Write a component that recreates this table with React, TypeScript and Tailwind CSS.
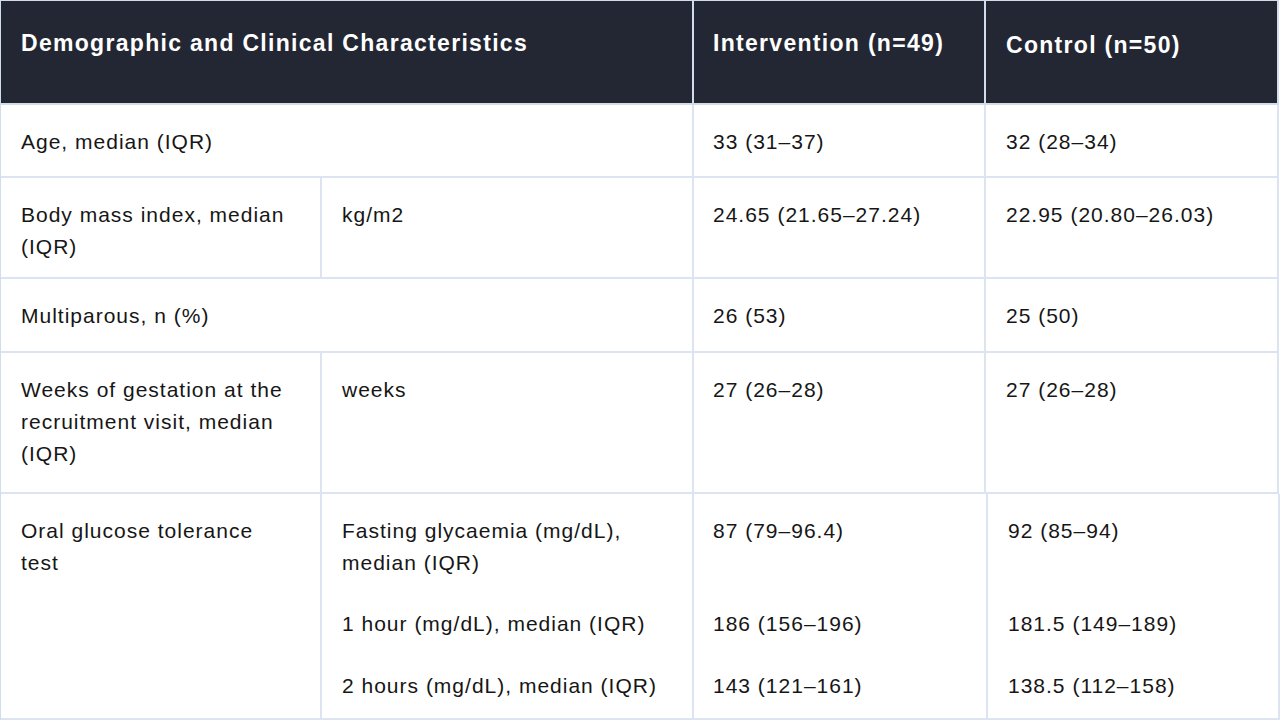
import React from "react";

const font = "font-['Liberation_Sans',Arial,Helvetica,sans-serif]";

function Cell({
  children,
  className = "",
}: {
  children?: React.ReactNode;
  className?: string;
}) {
  return (
    <div
      className={`border-r-2 border-b-2 border-[#dce4f2] pl-5 pr-5 pt-[21px] text-[21px] leading-[32px] tracking-[1px] text-[#161616] ${className}`}
    >
      {children}
    </div>
  );
}

function HeadCell({
  children,
  className = "",
}: {
  children?: React.ReactNode;
  className?: string;
}) {
  return (
    <div
      className={`h-[104px] border-r-2 border-b-2 border-[#d3dcec] bg-[#232733] pl-5 pt-[26px] text-[23px] font-bold leading-[32px] tracking-[1.3px] text-white whitespace-nowrap ${className}`}
    >
      {children}
    </div>
  );
}

export default function App() {
  return (
    <div className={`h-[720px] w-[1280px] overflow-hidden bg-white ${font}`}>
      <div className="grid w-[1279px] grid-cols-[321px_372px_292px_293px] border-l border-t border-[#d3dcec]">
        <HeadCell className="col-span-2">Demographic and Clinical Characteristics</HeadCell>
        <HeadCell className="pl-[19px]">Intervention (n=49)</HeadCell>
        <HeadCell className="pt-[28px]">Control (n=50)</HeadCell>

        <Cell className="col-span-2 h-[73px]">Age, median (IQR)</Cell>
        <Cell className="h-[73px] pl-[19px]">33 (31–37)</Cell>
        <Cell className="h-[73px]">32 (28–34)</Cell>

        <Cell className="h-[101px]">
          Body mass index, median
          <br />
          (IQR)
        </Cell>
        <Cell className="h-[101px]">kg/m2</Cell>
        <Cell className="h-[101px] pl-[19px]">24.65 (21.65–27.24)</Cell>
        <Cell className="h-[101px] whitespace-nowrap">22.95 (20.80–26.03)</Cell>

        <Cell className="col-span-2 h-[74px]">Multiparous, n (%)</Cell>
        <Cell className="h-[74px] pl-[19px]">26 (53)</Cell>
        <Cell className="h-[74px]">25 (50)</Cell>

        <Cell className="h-[141px] pt-5 leading-[30.5px]">
          Weeks of gestation at the
          <br />
          recruitment visit, median
          <br />
          (IQR)
        </Cell>
        <Cell className="h-[141px] pt-5 text-[#383d4a]">weeks</Cell>
        <Cell className="h-[141px] pt-5 pl-[19px] text-[#383d4a]">27 (26–28)</Cell>
        <Cell className="h-[141px] pt-5 text-[#383d4a]">27 (26–28)</Cell>
      </div>

      <div className="grid w-[1280px] grid-cols-[321px_372px_294px_292px] border-l border-[#d3dcec]">
        <Cell className="h-[226px]">
          Oral glucose tolerance
          <br />
          test
        </Cell>
        <Cell className="h-[226px] whitespace-nowrap">
          <div className="h-[93px]">
            Fasting glycaemia (mg/dL),
            <br />
            median (IQR)
          </div>
          <div className="h-[62px]">1 hour (mg/dL), median (IQR)</div>
          <div>2 hours (mg/dL), median (IQR)</div>
        </Cell>
        <Cell className="h-[226px] pl-[19px] whitespace-nowrap">
          <div className="h-[93px]">87 (79–96.4)</div>
          <div className="h-[62px]">186 (156–196)</div>
          <div>143 (121–161)</div>
        </Cell>
        <Cell className="h-[226px] whitespace-nowrap">
          <div className="h-[93px]">92 (85–94)</div>
          <div className="h-[62px]">181.5 (149–189)</div>
          <div>138.5 (112–158)</div>
        </Cell>
      </div>
    </div>
  );
}
